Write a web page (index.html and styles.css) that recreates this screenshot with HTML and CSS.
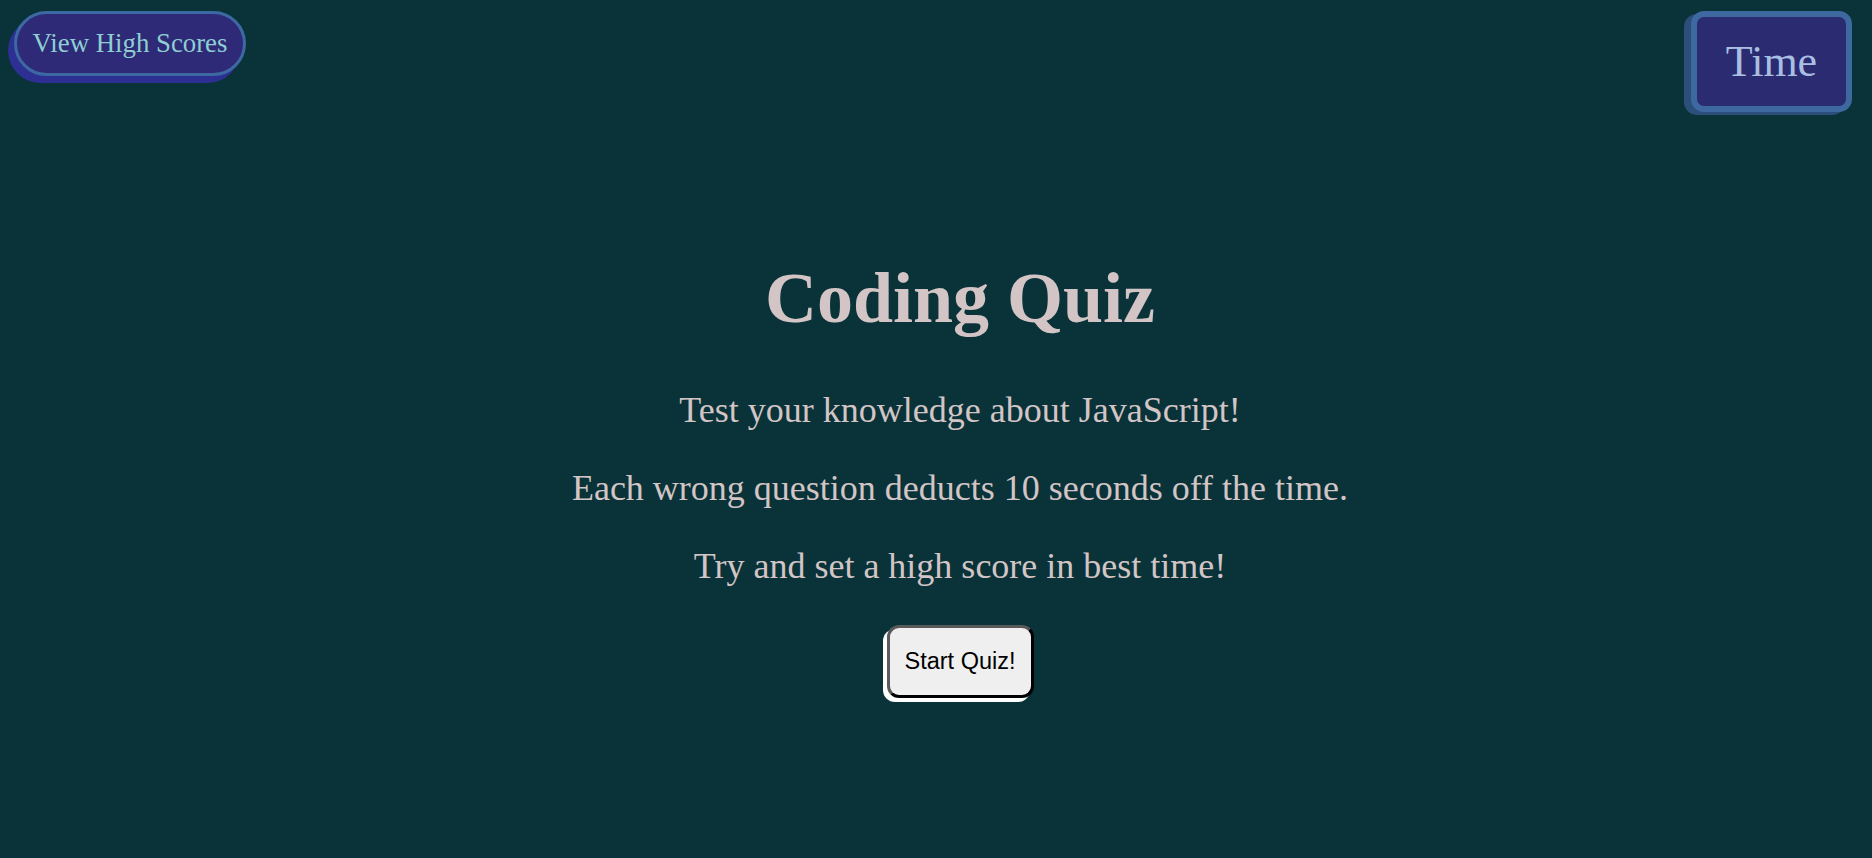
FILE: index.html
```html
<!DOCTYPE html>
<html lang="en">
<head>
<meta charset="utf-8">
<title>Coding Quiz</title>
<link rel="stylesheet" href="styles.css">
</head>
<body>
<header class="top-bar">
  <button class="scores-btn">View High Scores</button>
  <div class="timer">Time</div>
</header>
<main class="intro">
  <h1 class="title">Coding Quiz</h1>
  <p class="line">Test your knowledge about JavaScript!</p>
  <p class="line">Each wrong question deducts 10 seconds off the time.</p>
  <p class="line">Try and set a high score in best time!</p>
  <div class="actions">
    <button class="start-btn">Start Quiz!</button>
  </div>
</main>
</body>
</html>
```
FILE: styles.css
```css
html, body {
  margin: 0;
  padding: 0;
}

body {
  background: #093339;
  font-family: "Liberation Serif", "Times New Roman", serif;
  min-height: 858px;
}

.top-bar {
  display: flex;
  justify-content: space-between;
  align-items: flex-start;
  padding: 11px 20px 0 14px;
}

.scores-btn {
  box-sizing: border-box;
  height: 65px;
  width: 232px;
  padding: 0;
  display: flex;
  align-items: center;
  justify-content: center;
  background: #2e2a78;
  border: 3px solid #3d69a2;
  border-radius: 33px;
  box-shadow: -6px 7px 0 #2d2f92;
  color: #8ecfd2;
  font-family: "Liberation Serif", "Times New Roman", serif;
  font-size: 26.8px;
  cursor: pointer;
}

.timer {
  box-sizing: border-box;
  width: 161px;
  height: 101px;
  display: flex;
  align-items: center;
  justify-content: center;
  background: #2b2b72;
  border: 6px solid #3d69a0;
  border-radius: 13px;
  box-shadow: -7px 3px 0 #2c4e7b;
  color: #a9bfe2;
  font-size: 44px;
}

.intro {
  padding-left: 48px;
  padding-top: 94px;
  text-align: center;
  color: #d3c5c5;
}

.title {
  font-size: 72px;
  font-weight: bold;
  margin: 51px 0 49px;
}

.line {
  font-size: 36px;
  margin: 36px 0;
}

.actions {
  display: flex;
  justify-content: center;
  padding-top: 2px;
}

.start-btn {
  box-sizing: border-box;
  width: 147px;
  height: 73px;
  padding: 0;
  background: #efefef;
  color: #000;
  font-family: "Liberation Sans", Arial, sans-serif;
  font-size: 23.5px;
  border-style: solid;
  border-width: 3px;
  border-color: #5a5a5a #000 #000 #5a5a5a;
  border-radius: 12px;
  box-shadow: -4px 4px 0 #ffffff;
  cursor: pointer;
}
```
